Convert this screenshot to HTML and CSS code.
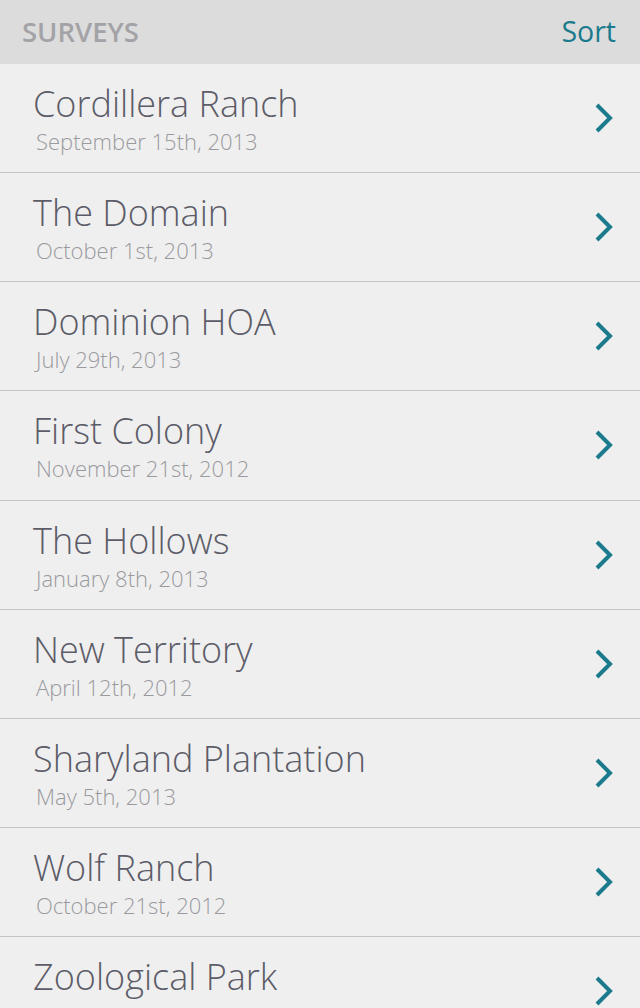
FILE: index.html
```html
<!DOCTYPE html>
<html>
<head>
<meta charset="utf-8">
<link rel="stylesheet" href="styles.css">
</head>
<body>
<header class="bar">
  <h1 class="bar-title">SURVEYS</h1>
  <span class="bar-action">Sort</span>
</header>
<ul class="list">
  <li class="row"><div class="text"><div class="name">Cordillera Ranch</div><div class="date">September 15th, 2013</div></div><svg class="chev" viewBox="0 0 20 30"><polyline points="3,2 16,15 3,28"/></svg></li>
  <li class="row"><div class="text"><div class="name">The Domain</div><div class="date">October 1st, 2013</div></div><svg class="chev" viewBox="0 0 20 30"><polyline points="3,2 16,15 3,28"/></svg></li>
  <li class="row"><div class="text"><div class="name">Dominion HOA</div><div class="date">July 29th, 2013</div></div><svg class="chev" viewBox="0 0 20 30"><polyline points="3,2 16,15 3,28"/></svg></li>
  <li class="row"><div class="text"><div class="name">First Colony</div><div class="date">November 21st, 2012</div></div><svg class="chev" viewBox="0 0 20 30"><polyline points="3,2 16,15 3,28"/></svg></li>
  <li class="row"><div class="text"><div class="name">The Hollows</div><div class="date">January 8th, 2013</div></div><svg class="chev" viewBox="0 0 20 30"><polyline points="3,2 16,15 3,28"/></svg></li>
  <li class="row"><div class="text"><div class="name">New Territory</div><div class="date">April 12th, 2012</div></div><svg class="chev" viewBox="0 0 20 30"><polyline points="3,2 16,15 3,28"/></svg></li>
  <li class="row"><div class="text"><div class="name">Sharyland Plantation</div><div class="date">May 5th, 2013</div></div><svg class="chev" viewBox="0 0 20 30"><polyline points="3,2 16,15 3,28"/></svg></li>
  <li class="row"><div class="text"><div class="name">Wolf Ranch</div><div class="date">October 21st, 2012</div></div><svg class="chev" viewBox="0 0 20 30"><polyline points="3,2 16,15 3,28"/></svg></li>
  <li class="row"><div class="text"><div class="name">Zoological Park</div></div><svg class="chev" viewBox="0 0 20 30"><polyline points="3,2 16,15 3,28"/></svg></li>
</ul>
</body>
</html>
```
FILE: styles.css
```css
html, body {
  margin: 0;
  padding: 0;
  background: #efefef;
  font-family: "Open Sans", sans-serif;
  height: 1008px;
  overflow: hidden;
}
.bar {
  height: 64px;
  background: #dcdcdc;
  display: flex;
  align-items: center;
  justify-content: space-between;
  padding: 0 24px 0 22px;
  box-sizing: border-box;
}
.bar-title {
  margin: 0;
  font-size: 27.5px;
  font-weight: 600;
  color: #a3a3a7;
  line-height: 32px;
}
.bar-action {
  font-size: 28.5px;
  font-weight: 400;
  color: #1b7a8c;
  line-height: 32px;
  margin-top: -2px;
}
.list {
  list-style: none;
  margin: 0;
  padding: 0;
}
.row {
  height: 108.125px;
  border-bottom: 1px solid #c4c4c4;
  display: flex;
  align-items: center;
  justify-content: space-between;
  padding: 0 26px 0 33px;
}
.text {
  align-self: flex-start;
  display: flex;
  flex-direction: column;
  padding-top: 20px;
}
.name {
  font-size: 36px;
  font-weight: 300;
  color: #5c5c68;
  line-height: 40px;
}
.date {
  font-size: 22px;
  font-weight: 300;
  color: #9a9a9e;
  line-height: 24px;
  margin-top: 5px;
  margin-left: 3px;
}
.chev {
  width: 20px;
  height: 30px;
  fill: none;
  stroke: #1b7a8c;
  stroke-width: 4;
}
```
